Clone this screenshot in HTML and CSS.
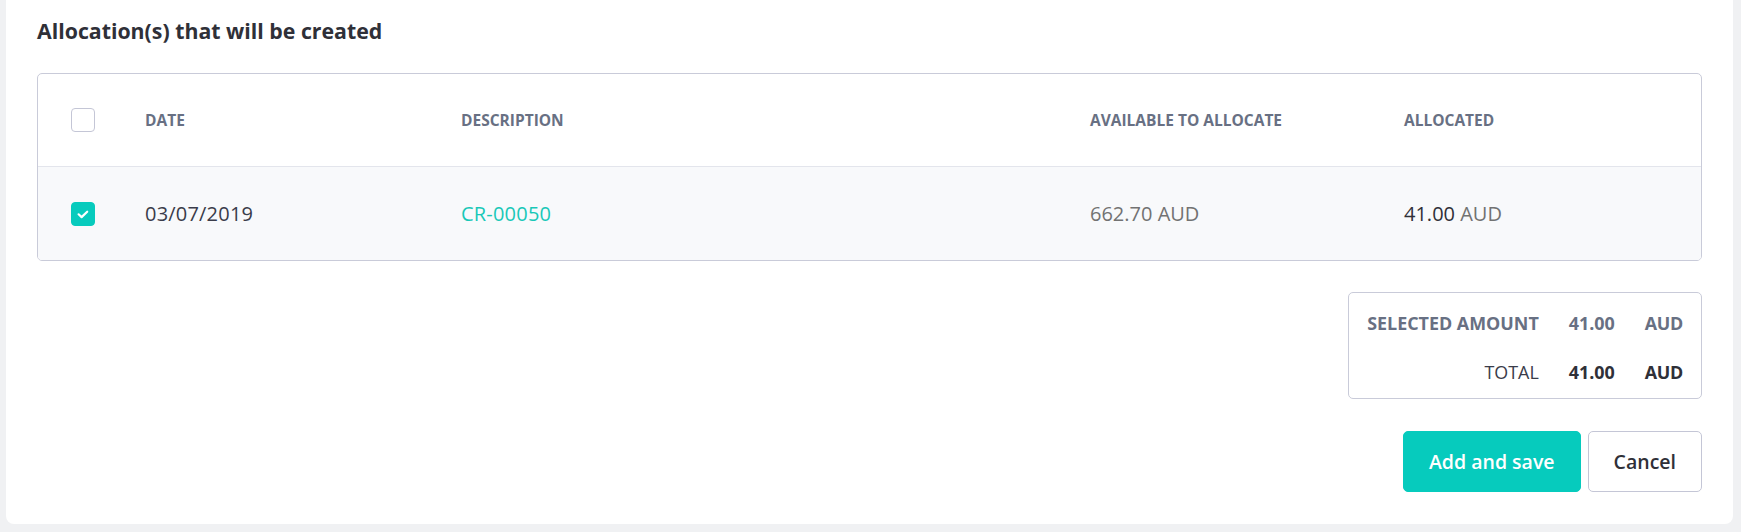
FILE: index.html
```html
<!DOCTYPE html>
<html lang="en">
<head>
<meta charset="utf-8">
<title>Allocations</title>
<link rel="stylesheet" href="styles.css">
</head>
<body>
<div class="card">
  <h2 class="title">Allocation(s) that will be created</h2>
  <div class="table">
    <div class="row head">
      <div class="cell cb"><span class="checkbox"></span></div>
      <div class="cell">Date</div>
      <div class="cell">Description</div>
      <div class="cell">Available to allocate</div>
      <div class="cell">Allocated</div>
    </div>
    <div class="row body">
      <div class="cell cb"><span class="checkbox checked"><svg viewBox="0 0 24 24" width="24" height="24"><path d="M7.6 12.3l3 2.8 5.6-5.4" fill="none" stroke="#fff" stroke-width="2.2" stroke-linecap="round" stroke-linejoin="round"/></svg></span></div>
      <div class="cell date">03/07/2019</div>
      <div class="cell"><a class="link" href="#">CR-00050</a></div>
      <div class="cell muted">662.70 AUD</div>
      <div class="cell amount">41.00 <span class="muted">AUD</span></div>
    </div>
  </div>
  <div class="summary-wrap">
    <div class="summary">
      <div class="s-label strong">Selected amount</div>
      <div class="s-val">41.00</div>
      <div class="s-cur">AUD</div>
      <div class="s-label">Total</div>
      <div class="s-val dark">41.00</div>
      <div class="s-cur dark">AUD</div>
    </div>
  </div>
  <div class="actions">
    <button class="btn primary" type="button">Add and save</button>
    <button class="btn secondary" type="button">Cancel</button>
  </div>
</div>
</body>
</html>
```
FILE: styles.css
```css
* { box-sizing: border-box; }
html, body { margin: 0; padding: 0; }
body {
  background: #f0f1f3;
  font-family: "Open Sans", Roboto, "Liberation Sans", Arial, sans-serif;
  color: #3a3c4a;
  padding: 0 8px 6px 6px;
}
.card {
  background: #fff;
  border-radius: 0 0 8px 8px;
  padding: 17px 31px 32px 31px;
}
.title {
  margin: 0;
  font-size: 21.3px;
  line-height: 28px;
  font-weight: 700;
  color: #2f3038;
}
.table {
  margin-top: 28px;
  border: 1px solid #c9cbd9;
  border-radius: 5px;
  overflow: hidden;
}
.row {
  display: grid;
  grid-template-columns: 107px 316px 629px 314px 1fr;
  align-items: center;
}
.row.head {
  height: 93px;
  border-bottom: 1px solid #e3e5ec;
}
.row.head .cell {
  font-size: 15.5px;
  font-weight: 700;
  text-transform: uppercase;
  color: #687083;
}
.row.body {
  height: 93px;
  background: #f8f9fb;
  font-size: 20px;
}
.cell.cb {
  padding-left: 33px;
  display: flex;
  align-items: center;
}
.checkbox {
  width: 24px;
  height: 24px;
  border: 1px solid #c4c6d6;
  border-radius: 4px;
  background: #fff;
  display: block;
}
.checkbox.checked {
  background: #07cbbd;
  border-color: #07cbbd;
}
.checkbox.checked svg {
  display: block;
  margin: -1px;
}
.date { color: #3a3c4a; letter-spacing: 0.2px; }
.link { color: #19c8b8; text-decoration: none; letter-spacing: 0.2px; }
.muted { color: #727272; }
.amount { color: #2f3038; }
.summary-wrap {
  display: flex;
  justify-content: flex-end;
  margin-top: 31px;
}
.summary {
  border: 1px solid #c9cbd9;
  border-radius: 5px;
  padding: 18px 18px 14px 18px;
  display: grid;
  grid-template-columns: auto auto auto;
  column-gap: 30px;
  row-gap: 25px;
  font-size: 17.9px;
  line-height: 24px;
}
.s-label {
  text-align: right;
  text-transform: uppercase;
  color: #3a3c4a;
}
.s-label.strong { font-weight: 700; color: #687083; }
.s-val, .s-cur { font-weight: 700; color: #687083; text-align: right; }
.s-cur { letter-spacing: -0.3px; }
.s-val.dark, .s-cur.dark { color: #2f3038; }
.actions {
  display: flex;
  justify-content: flex-end;
  gap: 7px;
  margin-top: 32px;
}
.btn {
  height: 61px;
  border-radius: 5px;
  font-family: inherit;
  font-size: 19.5px;
  font-weight: 600;
  padding: 0 25px;
  cursor: pointer;
}
.btn.primary {
  background: #06cbbd;
  color: #fff;
  border: 1px solid #06cbbd;
}
.btn.secondary {
  background: #fff;
  color: #2f3038;
  border: 1px solid #c4c6d6;
}
```
